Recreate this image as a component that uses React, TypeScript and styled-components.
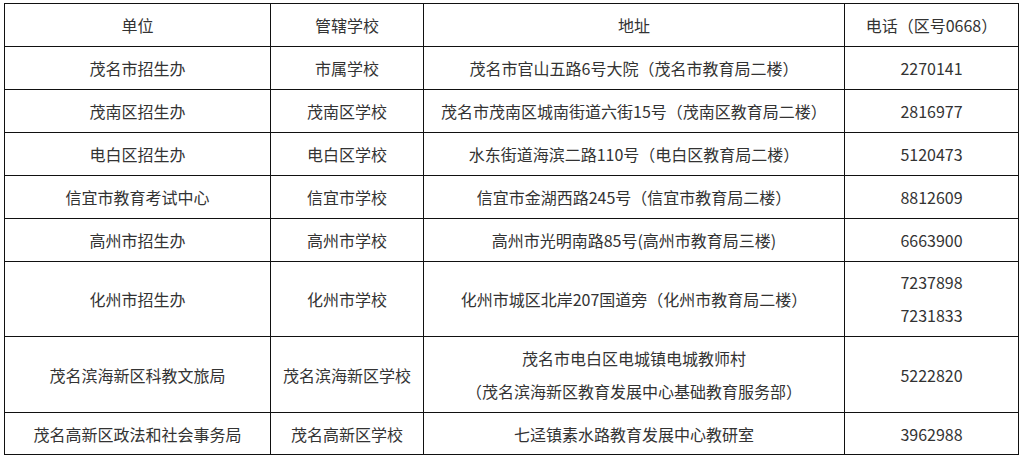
import React from "react";
import styled, { createGlobalStyle } from "styled-components";

const Global = createGlobalStyle`
  html, body { margin: 0; padding: 0; background: #fff; }
  body { padding: 3px 4px; font-family: "Microsoft YaHei", "Noto Sans CJK SC", "Noto Sans", sans-serif; }
`;

const Table = styled.table`
  border-collapse: collapse;
  table-layout: fixed;
  width: 1014px;
  color: #333;
  font-size: 16px;
`;

const Tr = styled.tr<{ $h: number }>`
  height: ${(p) => p.$h}px;
`;

const Cell = styled.td`
  border: 1px solid #111;
  padding: 0 4px;
  text-align: center;
  vertical-align: middle;
  line-height: 20px;
`;

const Line = styled.div`
  line-height: 33px;
`;

type Row = { unit: string; school: string; addr: string[]; tel: string[]; h: number };

const rows: Row[] = [
  { unit: "茂名市招生办", school: "市属学校", addr: ["茂名市官山五路6号大院（茂名市教育局二楼）"], tel: ["2270141"], h: 43 },
  { unit: "茂南区招生办", school: "茂南区学校", addr: ["茂名市茂南区城南街道六街15号（茂南区教育局二楼）"], tel: ["2816977"], h: 43 },
  { unit: "电白区招生办", school: "电白区学校", addr: ["水东街道海滨二路110号（电白区教育局二楼）"], tel: ["5120473"], h: 43 },
  { unit: "信宜市教育考试中心", school: "信宜市学校", addr: ["信宜市金湖西路245号（信宜市教育局二楼）"], tel: ["8812609"], h: 43 },
  { unit: "高州市招生办", school: "高州市学校", addr: ["高州市光明南路85号(高州市教育局三楼)"], tel: ["6663900"], h: 43 },
  { unit: "化州市招生办", school: "化州市学校", addr: ["化州市城区北岸207国道旁（化州市教育局二楼）"], tel: ["7237898", "7231833"], h: 75 },
  { unit: "茂名滨海新区科教文旅局", school: "茂名滨海新区学校", addr: ["茂名市电白区电城镇电城教师村", "（茂名滨海新区教育发展中心基础教育服务部）"], tel: ["5222820"], h: 76 },
  { unit: "茂名高新区政法和社会事务局", school: "茂名高新区学校", addr: ["七迳镇素水路教育发展中心教研室"], tel: ["3962988"], h: 42 },
];

const multi = (items: string[]) =>
  items.length === 1 ? items[0] : items.map((t, i) => <Line key={i}>{t}</Line>);

export default function App() {
  return (
    <>
      <Global />
      <Table>
        <colgroup>
          <col style={{ width: 266 }} />
          <col style={{ width: 153 }} />
          <col style={{ width: 421 }} />
          <col style={{ width: 174 }} />
        </colgroup>
        <tbody>
          <Tr $h={43}>
            <Cell>单位</Cell>
            <Cell>管辖学校</Cell>
            <Cell>地址</Cell>
            <Cell>电话（区号0668）</Cell>
          </Tr>
          {rows.map((r) => (
            <Tr key={r.unit} $h={r.h}>
              <Cell>{r.unit}</Cell>
              <Cell>{r.school}</Cell>
              <Cell>{multi(r.addr)}</Cell>
              <Cell>{multi(r.tel)}</Cell>
            </Tr>
          ))}
        </tbody>
      </Table>
    </>
  );
}
